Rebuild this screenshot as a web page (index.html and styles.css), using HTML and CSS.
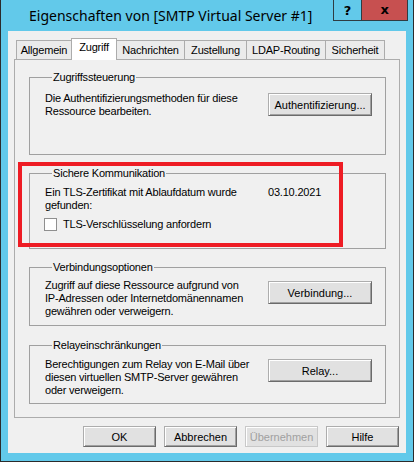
FILE: index.html
```html
<!DOCTYPE html>
<html>
<head>
  <title>Eigenschaften von [SMTP Virtual Server #1]</title>
  <meta charset="UTF-8">
  <link rel="stylesheet" href="styles.css">
</head>
<body>
  <div class="window">
    <div class="titlebar">
      <span class="title">Eigenschaften von [SMTP Virtual Server #1]</span>
      <div class="caption">
        <span class="cap-btn cap-help">?</span>
        <span class="cap-btn cap-close">x</span>
      </div>
    </div>
    <div class="client">
      <div class="tabs">
        <span class="tab">Allgemein</span>
        <span class="tab selected">Zugriff</span>
        <span class="tab">Nachrichten</span>
        <span class="tab">Zustellung</span>
        <span class="tab">LDAP-Routing</span>
        <span class="tab">Sicherheit</span>
      </div>
      <div class="page">
        <fieldset class="group group-auth">
          <legend>Zugriffssteuerung</legend>
          <div class="row">
            <p>Die Authentifizierungsmethoden für diese<br>Ressource bearbeiten.</p>
            <button class="btn btn-side">Authentifizierung...</button>
          </div>
        </fieldset>
        <fieldset class="group group-tls">
          <legend>Sichere Kommunikation</legend>
          <div class="row">
            <p class="tls-text">Ein TLS-Zertifikat mit Ablaufdatum wurde<br>gefunden:</p>
            <span class="date">03.10.2021</span>
          </div>
          <label class="check">
            <input type="checkbox">
            TLS-Verschlüsselung anfordern
          </label>
        </fieldset>
        <fieldset class="group group-conn">
          <legend>Verbindungsoptionen</legend>
          <div class="row">
            <p>Zugriff auf diese Ressource aufgrund von<br>IP-Adressen oder Internetdomänennamen<br>gewähren oder verweigern.</p>
            <button class="btn btn-side">Verbindung...</button>
          </div>
        </fieldset>
        <fieldset class="group group-relay">
          <legend>Relayeinschränkungen</legend>
          <div class="row">
            <p>Berechtigungen zum Relay von E-Mail über<br>diesen virtuellen SMTP-Server gewähren<br>oder verweigern.</p>
            <button class="btn btn-side">Relay...</button>
          </div>
        </fieldset>
      </div>
      <div class="actions">
        <button class="btn">OK</button>
        <button class="btn">Abbrechen</button>
        <button class="btn" disabled>Übernehmen</button>
        <button class="btn">Hilfe</button>
      </div>
    </div>
    <div class="highlight"></div>
  </div>
</body>
</html>
```
FILE: styles.css
```css
:root {
  --frame: #62c9ea;
  --frame-edge: #2b2b2b;
  --face: #f0f0f0;
  --btn-face: #e1e1e1;
  --line: #a0a0a0;
  --dark-line: #6b6b6b;
  --red: #ee1c24;
}
body {
  margin: 0;
  font-family: "Liberation Sans", Arial, sans-serif;
  font-size: 11px;
  letter-spacing: -0.2px;
  color: #000;
}
.window {
  position: relative;
  width: 414px;
  height: 462px;
  box-sizing: border-box;
  background: var(--frame);
  border: 1px solid var(--frame-edge);
  border-top: none;
  display: flex;
  flex-direction: column;
}
.titlebar {
  height: 31px;
  display: flex;
  align-items: flex-start;
}
.title {
  flex: 1;
  padding: 6px 0 0 28px;
  font-family: "Noto Sans", sans-serif;
  font-size: 14px;
  letter-spacing: 0;
  line-height: 20px;
}
.caption {
  display: flex;
  margin-right: 5px;
}
.cap-btn {
  height: 21px;
  box-sizing: border-box;
  border: 1px solid #2f3c42;
  border-top: none;
  display: flex;
  align-items: center;
  justify-content: center;
  font-family: "DejaVu Sans", sans-serif;
  font-weight: bold;
  font-size: 13px;
}
.cap-help {
  width: 29px;
}
.cap-close {
  width: 46px;
  border-left: none;
  background: #c75050;
  padding-bottom: 2px;
}
.client {
  flex: 1;
  margin: 0 7px 8px 7px;
  padding: 7px 6px 0 6px;
  background: var(--face);
  display: flex;
  flex-direction: column;
}
.tabs {
  display: flex;
  align-items: flex-end;
  height: 21px;
  padding-left: 2px;
}
.tab {
  height: 19px;
  box-sizing: border-box;
  padding-top: 2px;
  border: 1px solid #acacac;
  border-bottom: none;
  margin-right: -1px;
  background: #ebebeb;
  line-height: 15px;
  text-align: center;
  white-space: nowrap;
}
.tab:nth-child(1) { width: 56px; }
.tab:nth-child(2) { width: 46px; }
.tab:nth-child(3) { width: 69px; }
.tab:nth-child(4) { width: 63px; }
.tab:nth-child(5) { width: 80px; }
.tab:nth-child(6) { width: 60px; }
.tab.selected {
  position: relative;
  z-index: 1;
  height: 22px;
  margin-bottom: -1px;
  padding-top: 1px;
  background: #fff;
}
.page {
  height: 359px;
  box-sizing: border-box;
  border: 1px solid #acacac;
  padding: 11px 13px 0 14px;
  background: var(--face);
  display: flex;
  flex-direction: column;
  gap: 12px;
}
.group {
  margin: 0;
  min-width: 0;
  box-sizing: border-box;
  border: 1px solid var(--line);
  padding: 6px 13px 0 15px;
}
.group legend {
  margin-left: 7px;
  padding: 0 1px;
  line-height: 13px;
}
.group-auth {
  height: 84px;
  padding-top: 8px;
}
.group-tls {
  height: 82px;
}
.group-conn {
  height: 65px;
  padding-top: 5px;
}
.group-relay {
  height: 65px;
  margin-top: 1px;
}
.row {
  display: flex;
  align-items: flex-start;
  justify-content: space-between;
}
.row p {
  margin: 0;
  line-height: 13px;
}
.tls-text {
  width: 223px;
}
.date {
  flex: 1;
  line-height: 13px;
}
.check {
  display: flex;
  align-items: center;
  gap: 6px;
  margin: 6px 0 0 -1px;
  line-height: 13px;
}
.check input {
  appearance: none;
  margin: 0;
  width: 13px;
  height: 13px;
  border: 1px solid #8f8f8f;
  background: #fff;
}
.btn {
  font: inherit;
  color: #000;
  height: 23px;
  padding: 0;
  background: var(--btn-face);
  border: 1px solid;
  border-color: #adadad var(--dark-line) var(--dark-line) #adadad;
  box-shadow: inset 1px 1px #fff, inset -1px -1px var(--line);
}
.btn-side {
  width: 104px;
  margin-top: 1px;
}
.group-conn .btn-side {
  margin-top: 2px;
}
.btn:disabled {
  color: #a0a0a0;
  border-color: #c8c8c8;
  box-shadow: inset 1px 1px #fff;
}
.actions {
  display: flex;
  justify-content: flex-end;
  gap: 8px;
  margin: 8px 1px 0 0;
}
.actions .btn {
  width: 73px;
  height: 21px;
}
.highlight {
  position: absolute;
  left: 17px;
  top: 162px;
  width: 325px;
  height: 85px;
  box-sizing: border-box;
  border: 4px solid var(--red);
}
```
